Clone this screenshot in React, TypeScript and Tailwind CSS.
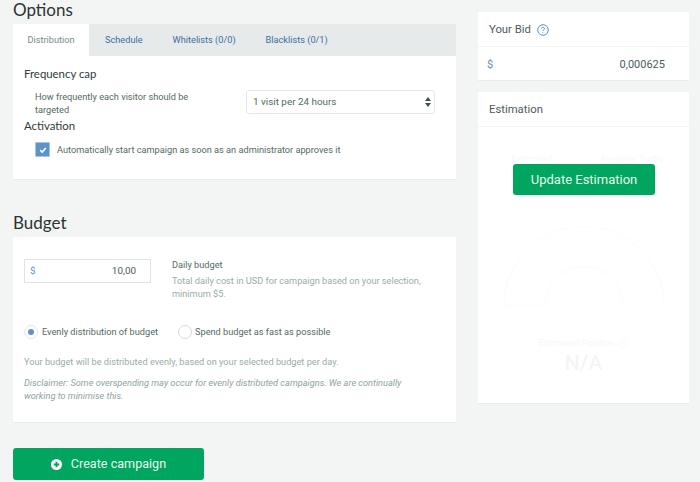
const TABS = ['Schedule', 'Whitelists (0/0)', 'Blacklists (0/1)'];

function HelpIcon({ className }: { className: string }) {
  return (
    <svg viewBox="0 0 12 12" className={className} fill="none" stroke="currentColor">
      <circle cx="6" cy="6" r="5.3" strokeWidth="0.9" />
      <path d="M4.5 4.7c0-.9.7-1.4 1.5-1.4s1.5.5 1.5 1.3c0 1.2-1.5 1.2-1.5 2.4" strokeWidth="0.9" />
      <circle cx="6" cy="8.7" r="0.5" fill="currentColor" stroke="none" />
    </svg>
  );
}

function OptionsCard() {
  return (
    <div className="h-[156px] bg-white border-b border-[#e9ecec]">
      <div className="flex h-8 bg-[#e7eaea] text-[9.2px] text-[#3a6f9f]">
        <div className="flex w-[76px] items-center justify-center bg-white text-[#7a8a8a]">Distribution</div>
        <div className="flex items-center pl-[16px] gap-[30px]">
          {TABS.map((tab) => (
            <span key={tab}>{tab}</span>
          ))}
        </div>
      </div>
      <div className="px-[11px] pt-[11px]">
        <h3 className="font-['Lato',sans-serif] text-[11.4px] leading-[14px] text-[#2f3b3b]">Frequency cap</h3>
        <div className="flex items-start pl-[11px] pt-[9px]">
          <div className="w-[211px]">
            <p className="w-[165px] text-[9.2px] leading-[13px] text-[#546a62]">How frequently each visitor should be targeted</p>
          </div>
          <div className="relative flex h-6 w-[189px] items-center rounded-[3px] border border-[#e6e8e8] pl-[6px] text-[9.9px] text-[#546a62]">
            1 visit per 24 hours
            <svg viewBox="0 0 6 10" className="absolute right-[3px] top-[6px] h-[10px] w-[6px]" fill="#3f4f4f">
              <path d="M3 0 6 4H0ZM3 10 0 6H6Z" />
            </svg>
          </div>
        </div>
        <h3 className="mt-[3px] font-['Lato',sans-serif] text-[11.4px] leading-[14px] text-[#2f3b3b]">Activation</h3>
        <div className="flex items-center gap-[7px] pl-[11px] pt-[9px]">
          <span className="flex h-[15px] w-[15px] items-center justify-center rounded-[1px] bg-[#5b94c8] border border-[#a9c5de]">
            <svg viewBox="0 0 10 10" className="h-2 w-2" fill="none" stroke="white" strokeWidth="2">
              <path d="M1.5 5.2 4 7.5l4.5-5" />
            </svg>
          </span>
          <span className="text-[9.2px] text-[#546a62]">Automatically start campaign as soon as an administrator approves it</span>
        </div>
      </div>
    </div>
  );
}

function BudgetCard() {
  return (
    <div className="h-[186px] bg-white border-b border-[#e9ecec] px-[11px] pt-[22px]">
      <div className="flex items-start">
        <div className="flex h-6 w-[127px] items-center justify-between border border-[#dfe3e3] pl-[5px] pr-[14px] text-[9.9px] text-[#4c5c5c]">
          <span className="text-[#5b94c8]">$</span>
          <span>10,00</span>
        </div>
        <div className="-mt-[1px] pl-[21px]">
          <p className="text-[9.2px] leading-[13px] text-[#546a62]">Daily budget</p>
          <p className="mt-[3px] w-[262px] text-[9.2px] leading-[13px] text-[#9aaca8]">
            Total daily cost in USD for campaign based on your selection, minimum $5.
          </p>
        </div>
      </div>
      <div className="mt-[25px] flex items-center text-[9.2px] text-[#546a62]">
        <span className="flex h-[14px] w-[14px] items-center justify-center rounded-full border border-[#e4e7e7]">
          <span className="h-[6px] w-[6px] rounded-full bg-[#5b94c8]" />
        </span>
        <span className="ml-[4px]">Evenly distribution of budget</span>
        <span className="ml-[20px] h-[14px] w-[14px] rounded-full border border-[#d8dcdc]" />
        <span className="ml-[3px]">Spend budget as fast as possible</span>
      </div>
      <p className="mt-[16px] text-[9.2px] leading-[13px] text-[#9aaca8]">
        Your budget will be distributed evenly, based on your selected budget per day.
      </p>
      <p className="mt-[8px] w-[400px] text-[9.2px] italic leading-[13px] text-[#8ea3a0]">
        Disclaimer: Some overspending may occur for evenly distributed campaigns. We are continually working to minimise this.
      </p>
    </div>
  );
}

function EstimationCard() {
  return (
    <div className="relative mt-[11px] h-[312px] bg-white border-b border-[#e9ecec]">
      <div className="flex h-[35px] items-center border-b border-[#f3f5f5] px-[11px] pt-[2px] text-[11.3px] text-[#4c5c5c]">Estimation</div>
      <div className="flex justify-between pl-[34px] pr-[25px] pt-[26px] text-[9px] text-[#f8f8f8]">
        <span>Estimated</span>
        <span>Available Traffic</span>
      </div>
      <div className="flex justify-center pt-[59px]">
        <svg viewBox="0 0 162 80" className="h-[80px] w-[162px]" fill="none" stroke="#fbfbfb">
          <path d="M1 79.5a80 79 0 0 1 160 0M42 79.5a39 39 0 0 1 78 0M1 79.5h41" />
        </svg>
      </div>
      <div className="flex items-center justify-center gap-1 pt-[31px] text-[9px] text-[#f7f7f7]">
        Estimated Position
        <HelpIcon className="h-[10px] w-[10px]" />
      </div>
      <p className="text-center text-[21px] leading-[26px] text-[#f4f4f4]">N/A</p>
      <button className="absolute left-[35px] top-[72px] h-[31px] w-[142px] rounded-[3px] bg-[#00a65f] text-[13px] text-[#e8f7f0]">Update Estimation</button>
    </div>
  );
}

export default function App() {
  return (
    <div className="h-[482px] w-[700px] overflow-hidden bg-[#f3f5f5] font-['Roboto',sans-serif]">
      <div className="flex items-start pl-[13px]">
        <div className="w-[443px]">
          <h2 className="-mt-[3px] mb-[1px] font-['Lato',sans-serif] text-[17px] leading-[26px] text-[#2b3333]">Options</h2>
          <OptionsCard />
          <h2 className="mt-[28px] font-['Lato',sans-serif] text-[17px] leading-[29px] text-[#2b3333]">Budget</h2>
          <BudgetCard />
          <button className="mt-[25px] flex h-8 w-[191px] items-center justify-center gap-[9px] rounded-[3px] bg-[#00a65f] text-[12.6px] text-[#e8f7f0]">
            <svg viewBox="0 0 12 12" className="h-[11px] w-[11px]">
              <circle cx="6" cy="6" r="6" fill="white" />
              <path d="M6 3v6M3 6h6" stroke="#00a65f" strokeWidth="2" />
            </svg>
            Create campaign
          </button>
        </div>
        <div className="ml-[22px] w-[211px] pt-[12px]">
          <div className="h-[69px] bg-white border-b border-[#e9ecec]">
            <div className="flex h-[35px] items-center gap-[6px] border-b border-[#f3f5f5] px-[11px] pt-[2px] text-[11.3px] text-[#4c5c5c]">
              Your Bid
              <HelpIcon className="h-3 w-3 text-[#4f86bb]" />
            </div>
            <div className="flex h-[33px] items-center justify-between pl-[9px] pr-[24px] pt-[3px] text-[11px] text-[#4c5c5c]">
              <span className="text-[#5b94c8]">$</span>
              <span>0,000625</span>
            </div>
          </div>
          <EstimationCard />
        </div>
      </div>
    </div>
  );
}
